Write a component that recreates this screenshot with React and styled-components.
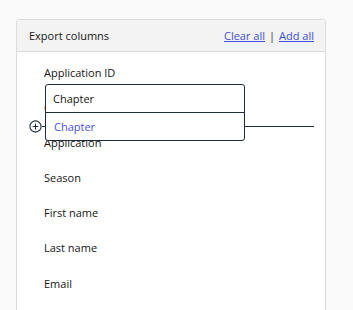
import React from "react";
import styled, { createGlobalStyle } from "styled-components";

const Global = createGlobalStyle`
  html, body { margin: 0; padding: 0; background: #f9f9f9; }
  body { font-family: "Open Sans", "Noto Sans", sans-serif; color: #151515; }
  * { box-sizing: border-box; }
`;

const Page = styled.div`
  padding: 19px 28px 0 16px;
  height: 310px;
  overflow: hidden;
`;

const Card = styled.section`
  position: relative;
  width: 310px;
  background: #fff;
  border: 1px solid #dcdcdc;
  border-radius: 3px;
  min-height: 320px;
`;

const Header = styled.header`
  display: flex;
  align-items: center;
  justify-content: space-between;
  height: 32px;
  padding: 0 11px 0 12px;
  background: #f3f3f3;
  border-bottom: 1px solid #dcdcdc;
  border-radius: 3px 3px 0 0;
  font-size: 11px;
`;

const Title = styled.span`
  color: #151515;
`;

const Links = styled.div`
  display: flex;
  gap: 4px;
  align-items: center;
  color: #333;
`;

const Link = styled.a`
  color: #3d4fe0;
  text-decoration: underline;
  cursor: pointer;
`;

const List = styled.ul`
  list-style: none;
  margin: 0;
  padding: 2.5px 0 0 27px;
`;

const Item = styled.li`
  height: 35.17px;
  display: flex;
  align-items: center;
  font-size: 11px;
  color: #151515;
`;

const Dropdown = styled.div`
  position: absolute;
  left: 28px;
  top: 64px;
  width: 200px;
  background: #fff;
  border: 1px solid #1f2b3a;
  border-radius: 3px;
  z-index: 2;
`;

const Input = styled.div`
  height: 28px;
  display: flex;
  align-items: center;
  padding: 0 7px;
  font-size: 11px;
  color: #151515;
  border-bottom: 1px solid #1f2b3a;
`;

const Option = styled.div`
  height: 27px;
  display: flex;
  align-items: center;
  padding: 0 8px;
  font-size: 11px;
  color: #4252e6;
`;

const DropLine = styled.div`
  position: absolute;
  left: 12px;
  top: 100px;
  width: 285px;
  display: flex;
  align-items: center;
  z-index: 1;
`;

const Rule = styled.div`
  flex: 1;
  height: 1.5px;
  background: #1f2b3a;
`;

const PlusIcon = () => (
  <svg width="13" height="13" viewBox="0 0 13 13" fill="none" stroke="#1f2b3a" strokeWidth="1.1">
    <circle cx="6.5" cy="6.5" r="5.6" />
    <path d="M6.5 3.6v5.8M3.6 6.5h5.8" />
  </svg>
);

const columns = [
  "Application ID",
  "Chapter",
  "Application",
  "Season",
  "First name",
  "Last name",
  "Email",
];

export default function App() {
  return (
    <>
      <Global />
      <Page>
        <Card>
          <Header>
            <Title>Export columns</Title>
            <Links>
              <Link>Clear all</Link>
              <span>|</span>
              <Link>Add all</Link>
            </Links>
          </Header>
          <List>
            {columns.map((c) => (
              <Item key={c}>{c}</Item>
            ))}
          </List>
          <DropLine>
            <PlusIcon />
            <Rule />
          </DropLine>
          <Dropdown>
            <Input>Chapter</Input>
            <Option>Chapter</Option>
          </Dropdown>
        </Card>
      </Page>
    </>
  );
}
